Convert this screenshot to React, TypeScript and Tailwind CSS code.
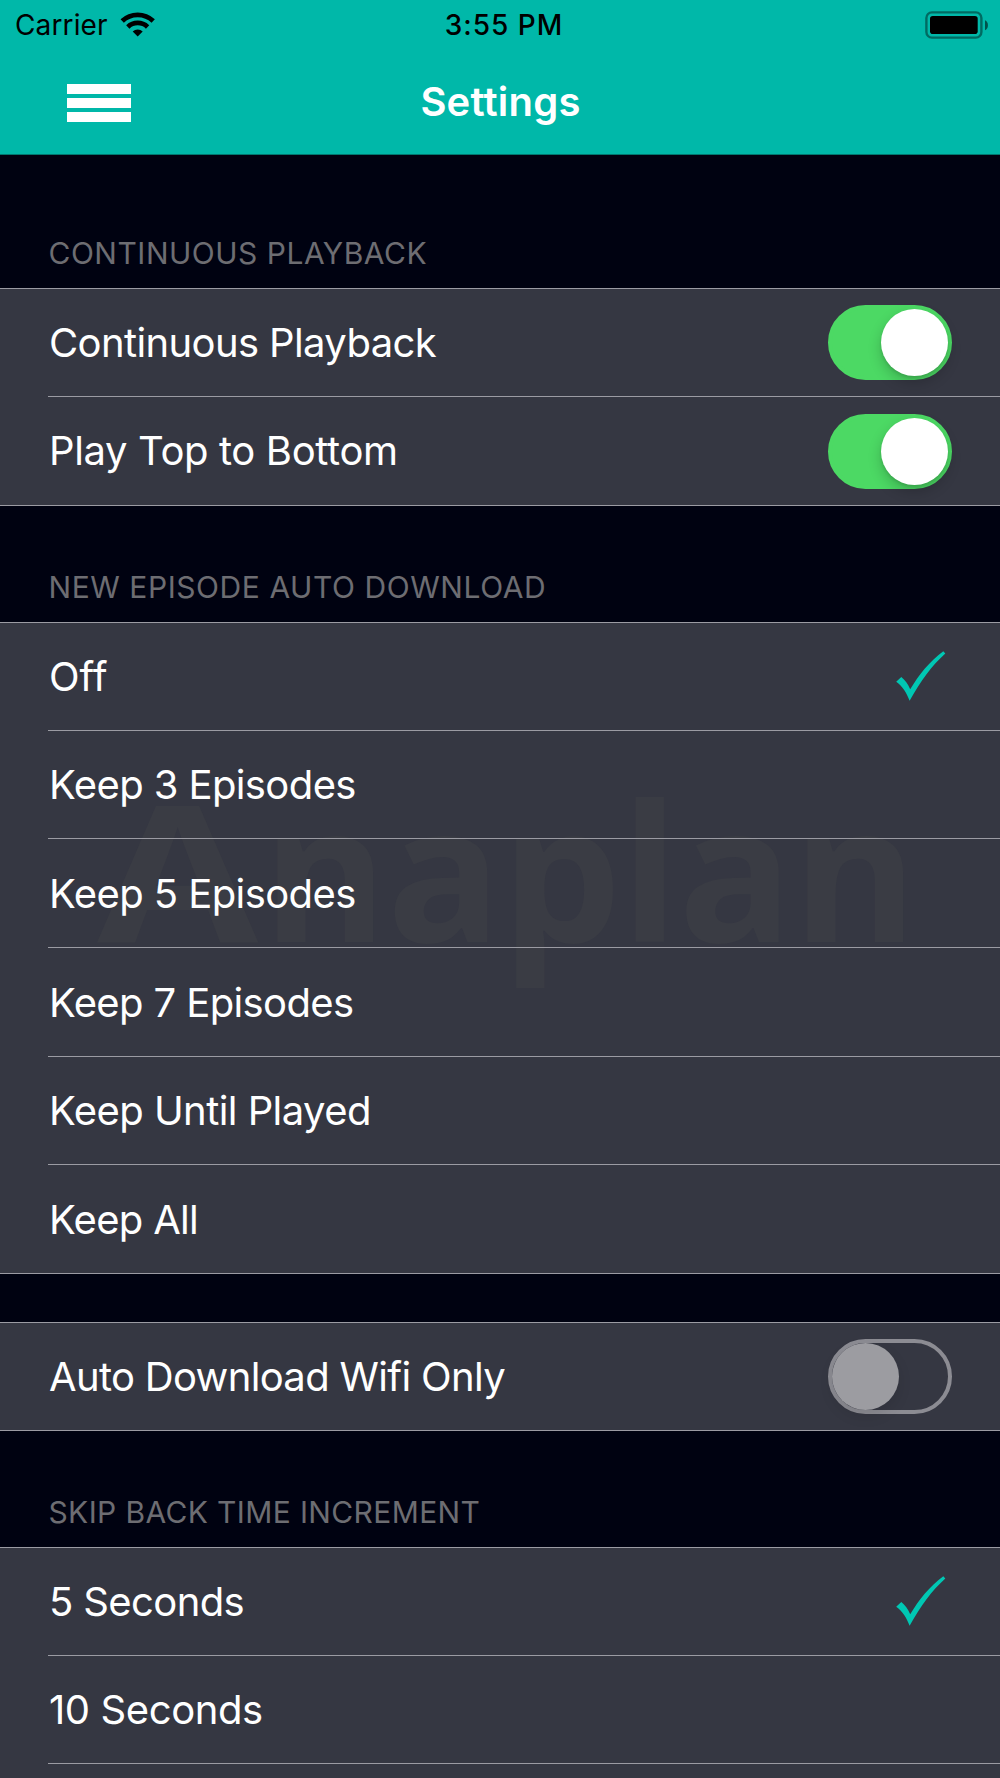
import React, { useState } from 'react';
import clsx from 'clsx';

interface Option {
  label: string;
  tracking: string;
}

interface ListProps {
  options: Option[];
  selected: string;
  onSelect: (label: string) => void;
}

const DOWNLOAD_OPTIONS: Option[] = [
  { label: 'Off', tracking: 'tracking-[0px]' },
  { label: 'Keep 3 Episodes', tracking: 'tracking-[-0.6px]' },
  { label: 'Keep 5 Episodes', tracking: 'tracking-[-0.58px]' },
  { label: 'Keep 7 Episodes', tracking: 'tracking-[-0.62px]' },
  { label: 'Keep Until Played', tracking: 'tracking-[-0.56px]' },
  { label: 'Keep All', tracking: 'tracking-[-0.7px]' },
];

const SKIP_OPTIONS: Option[] = [
  { label: '5 Seconds', tracking: 'tracking-[-0.62px]' },
  { label: '10 Seconds', tracking: 'tracking-[-0.41px]' },
];

const WifiIcon = () => (
  <svg width="36" height="26" viewBox="0 0 36 26" className="ml-[12px]">
    <g fill="none" stroke="#000" strokeWidth="4.8">
      <path d="M2.2 9.1 A22.5 22.5 0 0 1 33.2 9.1" />
      <path d="M7.8 14.9 A14.4 14.4 0 0 1 27.6 14.9" />
    </g>
    <path d="M12.7 19.4 A7.2 7.2 0 0 1 22.7 19.4 L17.7 24.5 Z" fill="#000" />
  </svg>
);

const BatteryIcon = () => (
  <svg width="65" height="28" viewBox="0 0 65 28">
    <rect x="1.4" y="1.4" width="55" height="25.2" rx="5.5" fill="none" stroke="#000" strokeOpacity="0.42" strokeWidth="2.4" />
    <rect x="5" y="5" width="47.7" height="18" rx="2.8" fill="#000" />
    <path d="M60 9.2 C63.9 10.4 63.9 18 60 19.2 Z" fill="#000" fillOpacity="0.55" />
  </svg>
);

const CheckIcon = () => (
  <svg width="50" height="50" viewBox="0 0 50 50" className="mr-[6px]">
    <path
      d="M.2 30.8 L5.3 26 C9 28.9 12 33 14.2 38.3 C23 23.5 33.5 10.5 47.3 .2 L49.3 2.4 C36 14.5 25 29 13.6 49.8 C10.8 42 6.5 35.5 .2 30.8 Z"
      fill="#00c7b3"
    />
  </svg>
);

const Toggle: React.FC<{ on: boolean; label: string; onChange: () => void }> = ({ on, label, onChange }) => (
  <button
    role="switch"
    aria-checked={on}
    aria-label={label}
    onClick={onChange}
    className={clsx(
      'mt-[2px] flex h-[75px] w-[124px] items-center rounded-full border-4',
      on ? 'justify-end border-[#4cd964] bg-[#4cd964]' : 'border-[#8c8c93]'
    )}
  >
    <span
      className={clsx(
        'size-[67px] rounded-full',
        on ? 'bg-white shadow-[0_6px_14px_rgba(0,0,0,0.2),0_2px_3px_rgba(0,0,0,0.1)]' : 'bg-[#9c9ca1] shadow-[0_6px_14px_rgba(0,0,0,0.1)]'
      )}
    />
  </button>
);

const Row: React.FC<{ label: string; tracking: string; onClick?: () => void; children?: React.ReactNode }> = ({
  label,
  tracking,
  onClick,
  children,
}) => (
  <div onClick={onClick} className="group relative flex h-[108.667px] pl-[48px]">
    <div className="flex flex-1 items-center justify-between border-b border-[#9b9ba3] pr-[48px] pl-px group-last:border-transparent">
      <span className={clsx('mt-[2px] whitespace-nowrap text-[40px] leading-[48px]', tracking)}>{label}</span>
      {children}
    </div>
  </div>
);

// Rows start under the top hairline so that the separators keep an even pitch
const Group: React.FC<{ className?: string; children: React.ReactNode }> = ({ className, children }) => (
  <div className={clsx('shrink-0 overflow-hidden border-y border-[#9b9ba3] bg-[#353742]', className)}>
    <div className="relative -mt-px">{children}</div>
  </div>
);

const SectionTitle: React.FC<{ className: string; children: React.ReactNode }> = ({ className, children }) => (
  <h2 className={clsx('flex shrink-0 items-end whitespace-nowrap pb-[20px] pl-[48.5px] text-[30px] leading-[30px] text-[#6d6d72]', className)}>
    {children}
  </h2>
);

const OptionList: React.FC<ListProps> = ({ options, selected, onSelect }) => (
  <>
    {options.map(o => (
      <Row key={o.label} label={o.label} tracking={o.tracking} onClick={() => onSelect(o.label)}>
        {selected === o.label && <CheckIcon />}
      </Row>
    ))}
  </>
);

const Watermark = () => (
  <div
    aria-hidden
    className="pointer-events-none absolute top-[127px] left-[97px] flex whitespace-nowrap font-['Open_Sans',sans-serif] text-[190px] leading-[240px] font-bold text-[#3a3c44]"
  >
    <span className="w-[165.5px] origin-left scale-x-[1.23]">A</span>
    <span className="tracking-[-0.5px]">naplan</span>
  </div>
);

const App: React.FC = () => {
  const [continuous, setContinuous] = useState(true);
  const [topToBottom, setTopToBottom] = useState(true);
  const [wifiOnly, setWifiOnly] = useState(false);
  const [download, setDownload] = useState('Off');
  const [skip, setSkip] = useState('5 Seconds');

  return (
    <div className="flex h-[1778px] w-[1000px] flex-col overflow-hidden bg-[#000211] font-['Inter',sans-serif] text-white">
      <header className="flex h-[155px] shrink-0 flex-col border-b border-[#00786f] bg-[#00b8a9]">
        {/* Status bar */}
        <div className="grid h-[50px] grid-cols-3 items-center pl-[15px] pr-[10px] text-[28px] leading-[50px] text-black">
          <div className="flex items-center">
            <span className="tracking-[0.13px]">Carrier</span>
            <WifiIcon />
          </div>
          <span className="pl-[3px] text-center font-medium tracking-[0.98px]">3:55 PM</span>
          <div className="flex justify-end">
            <BatteryIcon />
          </div>
        </div>

        {/* Navigation bar */}
        <div className="grid h-[104px] grid-cols-3 items-center px-[67px]">
          <button aria-label="Menu" className="mt-[2px] flex w-[63.5px] flex-col gap-[4px]">
            <span className="h-[10px] bg-white" />
            <span className="h-[10px] bg-white" />
            <span className="h-[10px] bg-white" />
          </button>
          <h1 className="pl-px text-center text-[40px] leading-[48px] font-semibold tracking-[0.2px]">Settings</h1>
        </div>
      </header>

      <SectionTitle className="h-[133px] tracking-[0.5px]">CONTINUOUS PLAYBACK</SectionTitle>
      <Group className="h-[218px]">
        <Row label="Continuous Playback" tracking="tracking-[-0.62px]">
          <Toggle on={continuous} label="Continuous Playback" onChange={() => setContinuous(!continuous)} />
        </Row>
        <Row label="Play Top to Bottom" tracking="tracking-[-0.36px]">
          <Toggle on={topToBottom} label="Play Top to Bottom" onChange={() => setTopToBottom(!topToBottom)} />
        </Row>
      </Group>

      <SectionTitle className="h-[116px] tracking-[0.56px]">NEW EPISODE AUTO DOWNLOAD</SectionTitle>
      <Group className="h-[652px]">
        <Watermark />
        <OptionList options={DOWNLOAD_OPTIONS} selected={download} onSelect={setDownload} />
      </Group>

      <Group className="mt-[48px] h-[109px]">
        <Row label="Auto Download Wifi Only" tracking="tracking-[-0.67px]">
          <Toggle on={wifiOnly} label="Auto Download Wifi Only" onChange={() => setWifiOnly(!wifiOnly)} />
        </Row>
      </Group>

      <SectionTitle className="h-[116px] tracking-[0.37px]">SKIP BACK TIME INCREMENT</SectionTitle>
      <Group>
        <OptionList options={SKIP_OPTIONS} selected={skip} onSelect={setSkip} />
        <div className="h-[20px]" />
      </Group>
    </div>
  );
};

export default App;
